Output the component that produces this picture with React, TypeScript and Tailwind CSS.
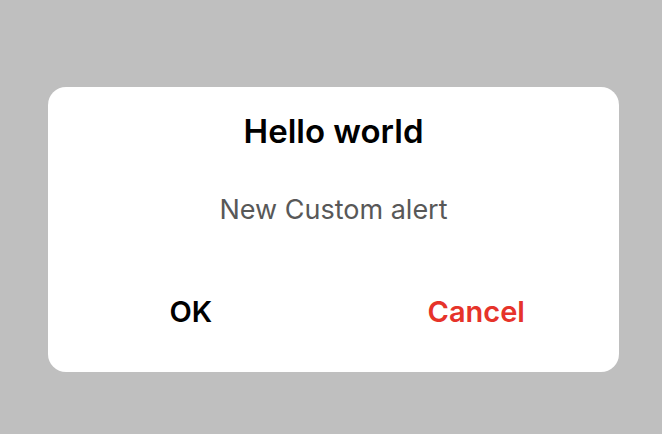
export default function App() {
  return (
    <div
      className="flex h-[434px] w-[662px] items-start bg-[#bfbfbf] pl-[48px] pt-[87px]"
      style={{ fontFamily: 'Inter, "Liberation Sans", Arial, sans-serif' }}
    >
      <AlertBox
        title="Hello world"
        message="New Custom alert"
        confirmLabel="OK"
        cancelLabel="Cancel"
      />
    </div>
  );
}

function AlertBox({
  title,
  message,
  confirmLabel,
  cancelLabel,
}: {
  title: string;
  message: string;
  confirmLabel: string;
  cancelLabel: string;
}) {
  return (
    <div className="flex h-[285px] w-[571px] flex-col rounded-[18px] bg-white pt-[24px]">
      <h1 className="text-center text-[33px] font-semibold leading-[40px] text-black">
        {title}
      </h1>
      <p className="mt-[41px] text-center text-[27px] leading-[36px] text-[#585858]">
        {message}
      </p>
      <div className="mt-[66px] flex">
        <button
          type="button"
          className="flex-1 text-center text-[29px] font-semibold leading-[36px] text-black"
        >
          {confirmLabel}
        </button>
        <button
          type="button"
          className="flex-1 text-center text-[29px] font-semibold leading-[36px] text-[#e6332a]"
        >
          {cancelLabel}
        </button>
      </div>
    </div>
  );
}
